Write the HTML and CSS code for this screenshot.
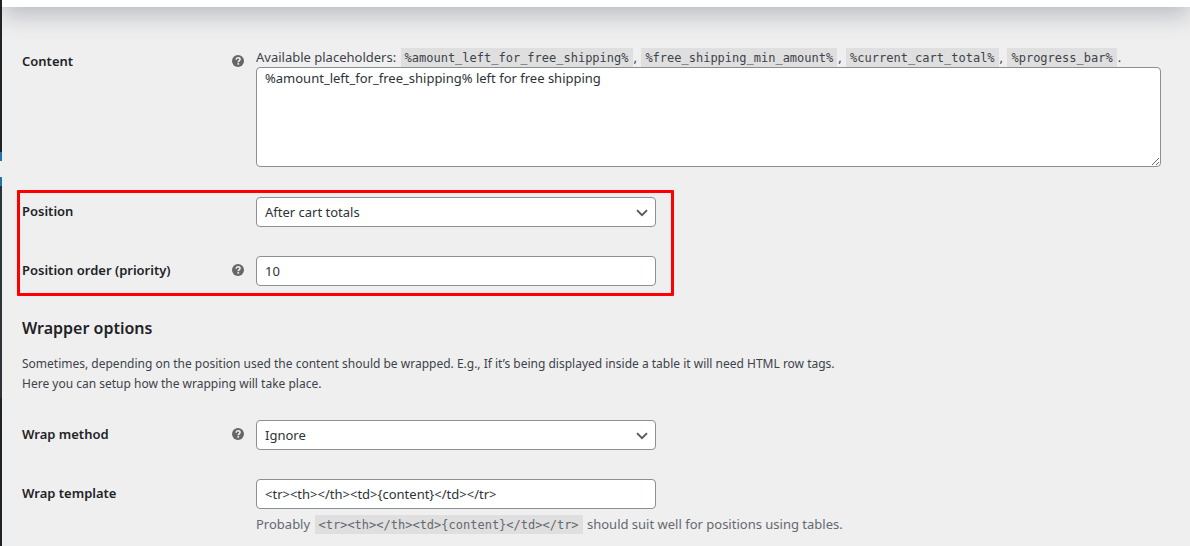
FILE: index.html
```html
<!DOCTYPE html>
<html lang="en">
<head>
<meta charset="utf-8">
<title>Wrapper options</title>
<link rel="stylesheet" href="styles.css">
</head>
<body>
<svg class="sprite" aria-hidden="true">
  <symbol id="help" viewBox="0 0 12 12">
    <circle cx="6" cy="6" r="6" fill="#646669"/>
    <path d="M4.2 4.7C4.2 3.4 5 2.8 6.1 2.8s1.9.6 1.9 1.6c0 .9-.6 1.2-1.1 1.6-.5.3-.6.6-.6 1.2" fill="none" stroke="#f0f0f1" stroke-width="1.6"/>
    <rect x="5.4" y="8.1" width="1.7" height="1.6" fill="#f0f0f1"/>
  </symbol>
  <symbol id="chevron" viewBox="0 0 12 8">
    <path d="M1 1.2l5 5 5-5" fill="none" stroke="#50575e" stroke-width="1.8"/>
  </symbol>
</svg>
<div class="page">
  <aside class="menu"><div class="menu-top"></div><div class="menu-current"></div><div class="menu-sub"></div><div class="menu-rest"></div></aside>
  <div class="main">
    <header class="topbar"></header>
    <form class="settings">
      <div class="row">
        <div class="title"><label for="content">Content</label><svg class="help"><use href="#help"/></svg></div>
        <div class="field">
          <p class="hint">Available placeholders: <code>%amount_left_for_free_shipping%</code>, <code>%free_shipping_min_amount%</code>, <code>%current_cart_total%</code>, <code>%progress_bar%</code>.</p>
          <textarea id="content" class="control area">%amount_left_for_free_shipping% left for free shipping</textarea>
        </div>
      </div>
      <div class="highlight">
        <div class="row">
          <div class="title"><label for="position">Position</label></div>
          <div class="field"><div class="select"><select id="position" class="control"><option>After cart totals</option></select><svg class="chevron"><use href="#chevron"/></svg></div></div>
        </div>
        <div class="row">
          <div class="title"><label for="priority">Position order (priority)</label><svg class="help"><use href="#help"/></svg></div>
          <div class="field"><input id="priority" class="control" type="text" value="10"></div>
        </div>
      </div>
      <section class="intro">
        <h2>Wrapper options</h2>
        <p>Sometimes, depending on the position used the content should be wrapped. E.g., If it’s being displayed inside a table it will need HTML row tags.<br>Here you can setup how the wrapping will take place.</p>
      </section>
      <div class="row">
        <div class="title"><label for="method">Wrap method</label><svg class="help"><use href="#help"/></svg></div>
        <div class="field"><div class="select"><select id="method" class="control"><option>Ignore</option></select><svg class="chevron"><use href="#chevron"/></svg></div></div>
      </div>
      <div class="row">
        <div class="title"><label for="template">Wrap template</label></div>
        <div class="field">
          <input id="template" class="control" type="text" value="&lt;tr&gt;&lt;th&gt;&lt;/th&gt;&lt;td&gt;{content}&lt;/td&gt;&lt;/tr&gt;">
          <p class="hint note">Probably <code>&lt;tr&gt;&lt;th&gt;&lt;/th&gt;&lt;td&gt;{content}&lt;/td&gt;&lt;/tr&gt;</code> should suit well for positions using tables.</p>
        </div>
      </div>
    </form>
  </div>
</div>
</body>
</html>
```
FILE: styles.css
```css
*, *::after { box-sizing: border-box; }
body {
  margin: 0;
  background: #efefef;
  color: #3c434a;
  font: 13px/20px "Noto Sans", "Open Sans", sans-serif;
}
p, h2 { margin: 0; }
.sprite { position: absolute; width: 0; height: 0; }
.page { display: flex; min-height: 100vh; }
.menu { display: flex; flex-direction: column; width: 2px; background: #1d2327; }
.menu-top { height: 152px; }
.menu-current { height: 34px; border: solid #2271b1; border-width: 9px 0; background: #efefef; }
.menu-sub { height: 212px; background: #2c3338; }
.menu-rest { flex: 1; }
.main { flex: 1; min-width: 0; overflow: hidden; }
.topbar { height: 60px; margin-top: -53px; background: #fff; box-shadow: 0 8px 24px 0 rgba(60, 67, 82, 0.3); }
.settings { display: flex; flex-direction: column; padding: 40px 29px 12px 20px; }
.row { display: flex; margin-bottom: 29px; }
.row:last-child { margin-bottom: 0; }
.title {
  display: flex;
  justify-content: space-between;
  align-items: center;
  width: 234px;
  height: 28px;
  padding-right: 12px;
  color: #1d2327;
  font-weight: 600;
}
.help { width: 12px; height: 12px; }
.field { flex: 1; min-width: 0; }
.hint { white-space: nowrap; height: 20px; }
.note { margin-top: 5px; color: #646970; }
code {
  margin: 0 1px;
  padding: 3px 4px 2px;
  background: #dfdfdf;
  font: 12px/15px "DejaVu Sans Mono", monospace;
}
.control {
  display: block;
  width: 100%;
  max-width: 400px;
  height: 30px;
  margin: 0;
  padding: 0 8px;
  border: 1px solid #8c8f94;
  border-radius: 4px;
  background: #fff;
  color: #2c3338;
  font: inherit;
}
.area { position: relative; max-width: none; height: 100px; resize: vertical; }
select.control { appearance: none; }
.select { position: relative; max-width: 400px; }
.chevron { position: absolute; right: 8px; top: 12px; width: 12px; height: 8px; pointer-events: none; }
.highlight { position: relative; margin: 1px 0 29px; }
.highlight::after {
  content: "";
  position: absolute;
  inset: -7px auto -10px -5px;
  width: 657px;
  border: 3px solid #f00;
  border-radius: 1px;
  pointer-events: none;
}
.intro { margin-bottom: 26px; font-size: 12px; }
h2 { margin-bottom: 13px; color: #1d2327; font-size: 16px; line-height: 26px; font-weight: 600; }
```
